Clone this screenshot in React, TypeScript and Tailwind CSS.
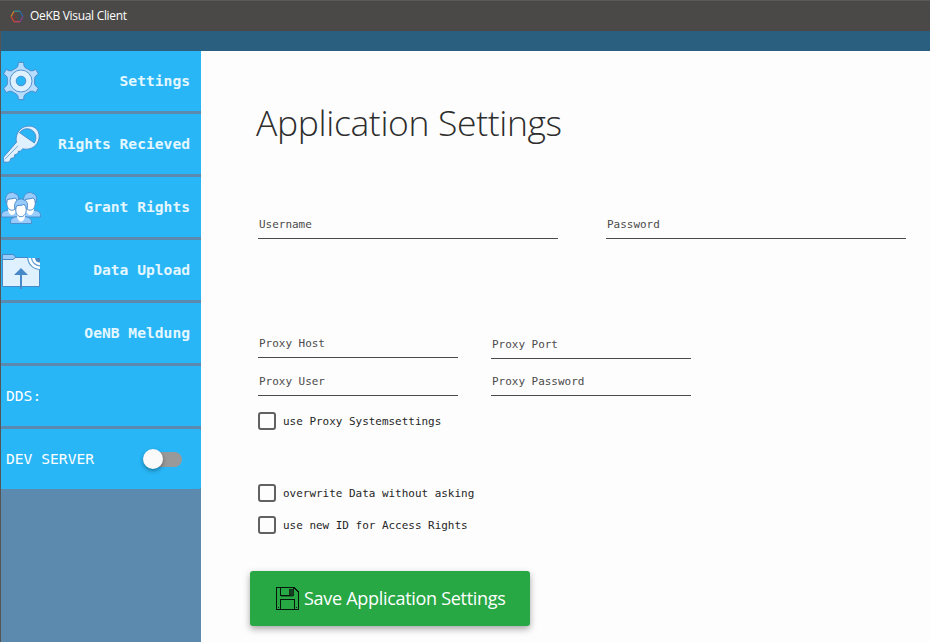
import React from "react";

const mono = "font-['DejaVu_Sans_Mono',monospace]";

function Logo() {
  return (
    <svg width="14" height="13" viewBox="0 0 14 13" fill="none" strokeWidth="1.1">
      <path d="M1 6.5 4 1.2" stroke="#d98a2b" />
      <path d="M4 1.2h6" stroke="#2b9aa8" />
      <path d="M10 1.2 13 6.5" stroke="#2a6fb5" />
      <path d="M13 6.5 10 11.8" stroke="#8b3f9a" />
      <path d="M10 11.8H4" stroke="#d6455f" />
      <path d="M4 11.8 1 6.5" stroke="#e0482f" />
      <path d="M4.500 3.500 7 2.800M4.400 4v5l3 1.600" stroke="#8c3034" strokeWidth=".8" />
      <path d="M7.500 3.200 10 4.600v3.600L7.500 10" stroke="#2d4f63" strokeWidth=".8" />
    </svg>
  );
}

const gearProfile: [number, number][] = [
  [14, -17],
  [15.6, -11],
  [18.8, -8],
  [18.8, 8],
  [15.6, 11],
  [14, 17],
];

const gearPoints = [0, 60, 120, 180, 240, 300]
  .flatMap((a) =>
    gearProfile.map(([r, d]) => {
      const t = ((a + d) * Math.PI) / 180;
      return `${(20 + r * Math.sin(t)).toFixed(2)},${(20 - r * Math.cos(t)).toFixed(2)}`;
    }),
  )
  .join(" ");

function GearIcon() {
  return (
    <svg width="40" height="40" viewBox="0 0 40 40" stroke="#4788c7" strokeWidth=".9" strokeLinejoin="round">
      <polygon points={gearPoints} fill="#b6dcfe" />
      <circle cx="20" cy="20" r="11" fill="#dff0fe" />
      <circle cx="20" cy="20" r="4.8" fill="#29b6f6" />
    </svg>
  );
}

function KeyIcon() {
  return (
    <svg width="40" height="40" viewBox="0 0 40 40" stroke="#4788c7" strokeWidth=".9" strokeLinejoin="round">
      <path
        d="M15.500 18.200C14 12 17.400 5.200 23 3c5-1.900 11-.8 13.600 3.400 2.800 4.500 1.700 11-2 14.800-3.400 3.600-8.300 4.700-12.800 3.600l-2.500 2.400-1.800-.1-.6 2.500-3.200 1.200-.4 2.800-3.500.8-.5 2.100-2.100 1.700-4.400-.1-.3-4.900z"
        fill="#dff0fe"
      />
      <path d="M18.500 8.600c3.500-4.200 9-5.300 13.200-1.800 3.800 3.200 4 8.100 1.600 12.100z" fill="#29b6f6" />
      <path d="M17 21.800 4 35.200" fill="none" strokeWidth=".7" />
    </svg>
  );
}

function Person() {
  return (
    <>
      <path d="M-10.500 25v-1.600c0-3.500 2.600-4.500 7-5.400h7c4.400.9 7 1.900 7 5.400V25z" fill="#98ccfd" />
      <path d="M-4 17.700C-3.400 21.500-1.700 23 0 23s3.400-1.500 4-5.300L3 14h-6z" fill="#fff" stroke="none" />
      <path d="M-5.200 7.400v4c0 4 2.300 6.800 5.200 6.800s5.200-2.800 5.200-6.800v-4L2.500 5.800z" fill="#fff" />
      <path d="M-6.100 10.600C-7.400 5-5 1.200-.9.6c2-.3 2.900.1 3.600 1C6 1.700 7.300 5.100 6.100 10.600l-.8-.5C5 7.500 3.800 6 2.700 6c-2 1.300-5.900.4-7.200 1.600-.5.6-.6 1.800-.7 2.600z" fill="#98ccfd" />
    </>
  );
}

function PeopleIcon() {
  return (
    <svg width="40" height="40" viewBox="0 0 40 40" stroke="#4788c7" strokeWidth=".9">
      <g transform="translate(11 5)"><Person /></g>
      <g transform="translate(29 5)"><Person /></g>
      <g transform="translate(20 11.500)"><Person /></g>
    </svg>
  );
}

function UploadIcon() {
  return (
    <svg width="40" height="40" viewBox="0 0 40 40" stroke="#4788c7">
      <path d="M1.500 7.500h37v29h-37z" fill="#dff0fe" />
      <path d="M26 6h14v2.500H27z" fill="#29b6f6" stroke="none" />
      <path d="M1.500 9.500v-5h10.500l3 2.500-3 2.500z" fill="#98ccfd" />
      <path d="M27 8a12 12 0 0 0 12 11.500V8z" fill="#fff" stroke="none" />
      <g fill="none" stroke="#5b9bd5" strokeWidth="1.2">
        <path d="M26.800 8A12.200 12.200 0 0 0 39 19.500M30.500 8A8.500 8.500 0 0 0 39 15.800" />
      </g>
      <path d="M34 8h5v4.500A5 5 0 0 1 34 8z" fill="#4788c7" stroke="none" />
      <path d="M20 39V22" strokeWidth="2" />
      <path d="m20 18-7 7h14z" fill="#4788c7" stroke="none" />
    </svg>
  );
}

function DiskIcon() {
  return (
    <svg width="23" height="23" viewBox="0 0 23 23" fill="none" stroke="#06140a" shapeRendering="crispEdges">
      <path d="M.5.5h17.500l4.500 4.500v17.500H.5z" />
      <path d="M4.500.5v8h13v-8M4.500 22.500V12.500h14v10" />
      <path d="M13.500 2.500h4v5.500h-3l-1-1z" fill="#173f22" stroke="#103018" />
      <path d="M5 9.500h12" stroke="#196e2e" />
      <path d="M2.500 19.500v1M20.500 19.500v1" />
    </svg>
  );
}

function NavItem({ label, icon }: { label: string; icon?: React.ReactNode }) {
  return (
    <div className="flex h-[60px] shrink-0 items-center justify-between bg-[#29b6f6] pr-[11px]">
      <div className="h-10 w-10">{icon}</div>
      <span className={`${mono} text-[14.63px] font-bold text-[#e4f7ff]`}>{label}</span>
    </div>
  );
}

function Field({ label, className }: { label: string; className: string }) {
  return (
    <div className={`${className} ${mono} flex h-[29px] items-center border-b border-[#4a4a4a] pt-[2px] pl-px text-[10.96px] text-[#4b4b4b]`}>
      {label}
    </div>
  );
}

function Check({ label }: { label: string }) {
  return (
    <label className={`${mono} flex h-[18px] items-center gap-[7px] text-[10.96px] text-[#262626]`}>
      <span className="h-[18px] w-[18px] rounded-[3px] border-2 border-[#616161]" />
      <span className="pt-[2px]">{label}</span>
    </label>
  );
}

export default function App() {
  return (
    <div className="flex h-[642px] w-[930px] flex-col overflow-hidden bg-[#fdfdfd]">
      <header className="flex h-[31px] shrink-0 items-center gap-[6px] border-t border-[#5b5955] bg-[#4a4947] pl-[10px]">
        <Logo />
        <span className="font-['Open_Sans',sans-serif] text-[12px] tracking-[-0.31px] text-white">OeKB Visual Client</span>
      </header>
      <div className="h-5 shrink-0 border-l border-[#555] bg-[#2b5f7f]" />
      <div className="flex min-h-0 flex-1">
        <nav className="flex w-[201px] shrink-0 flex-col gap-[3px] border-l border-[#555] bg-[#5c8aae]">
          <NavItem label="Settings" icon={<GearIcon />} />
          <NavItem label="Rights Recieved" icon={<KeyIcon />} />
          <NavItem label="Grant Rights" icon={<PeopleIcon />} />
          <NavItem label="Data Upload" icon={<UploadIcon />} />
          <NavItem label="OeNB Meldung" />
          <div className={`${mono} flex h-[60px] items-center bg-[#29b6f6] pl-[5px] text-[14.63px] text-white`}>DDS:</div>
          <div className={`${mono} flex h-[60px] items-center justify-between rounded-r-[2px] bg-[#29b6f6] pr-[19px] pl-[5px] text-[14.63px] text-white`}>
            <span>DEV SERVER</span>
            <span className="flex h-[15px] w-[36px] items-center rounded-full bg-[#999]">
              <span className="-ml-[3px] h-5 w-5 shrink-0 rounded-full bg-[#fafafa] shadow-[0_2px_4px_rgba(0,0,0,0.35)]" />
            </span>
          </div>
        </nav>
        <main className="flex flex-1 flex-col items-start pl-[57px]">
          <h1 className="mt-[46px] -ml-[2px] h-[50px] font-['Open_Sans',sans-serif] text-[35.5px] leading-[50px] font-[350] tracking-[-0.35px] whitespace-nowrap text-[#2d2d2d]">
            Application Settings
          </h1>
          <div className="mt-[63px] flex gap-12">
            <Field label="Username" className="w-[300px]" />
            <Field label="Password" className="w-[300px]" />
          </div>
          <div className="mt-[90px] flex items-start gap-[33px]">
            <Field label="Proxy Host" className="w-[200px]" />
            <Field label="Proxy Port" className="mt-px w-[200px]" />
          </div>
          <div className="mt-2 flex gap-[33px]">
            <Field label="Proxy User" className="w-[200px]" />
            <Field label="Proxy Password" className="w-[200px]" />
          </div>
          <div className="mt-4"><Check label="use Proxy Systemsettings" /></div>
          <div className="mt-[54px] flex flex-col gap-[14px]">
            <Check label="overwrite Data without asking" />
            <Check label="use new ID for Access Rights" />
          </div>
          <button className="mt-[37px] -ml-2 flex h-[55px] w-[280px] shrink-0 items-center gap-[5px] rounded-[3px] bg-[#28a745] pl-[26px] font-['Open_Sans',sans-serif] text-[18px] font-[370] tracking-[-0.3px] whitespace-nowrap text-white shadow-[0_3px_7px_rgba(0,0,0,0.35)]">
            <DiskIcon />
            <span>Save Application Settings</span>
          </button>
        </main>
      </div>
    </div>
  );
}
